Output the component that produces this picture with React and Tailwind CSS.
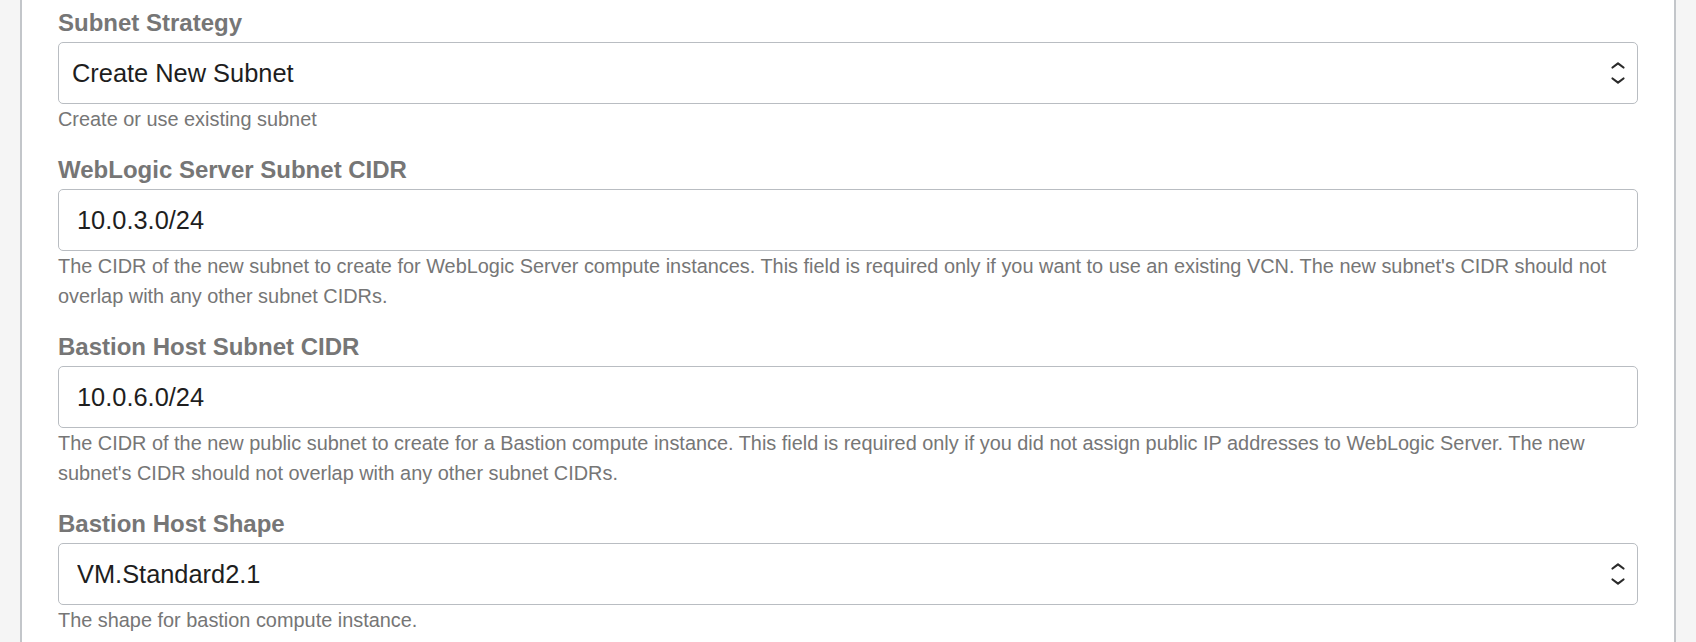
import React from 'react';

const fields = [
  {
    label: 'Subnet Strategy',
    type: 'select',
    value: 'Create New Subnet',
    pad: 'pl-[13px]',
    help: 'Create or use existing subnet',
  },
  {
    label: 'WebLogic Server Subnet CIDR',
    type: 'input',
    value: '10.0.3.0/24',
    pad: 'pl-[18px]',
    help: "The CIDR of the new subnet to create for WebLogic Server compute instances. This field is required only if you want to use an existing VCN. The new subnet's CIDR should not overlap with any other subnet CIDRs.",
  },
  {
    label: 'Bastion Host Subnet CIDR',
    type: 'input',
    value: '10.0.6.0/24',
    pad: 'pl-[18px]',
    help: "The CIDR of the new public subnet to create for a Bastion compute instance. This field is required only if you did not assign public IP addresses to WebLogic Server. The new subnet's CIDR should not overlap with any other subnet CIDRs.",
  },
  {
    label: 'Bastion Host Shape',
    type: 'select',
    value: 'VM.Standard2.1',
    pad: 'pl-[18px]',
    help: 'The shape for bastion compute instance.',
  },
];

const Chevrons = () => (
  <svg
    width="16"
    height="23"
    viewBox="0 0 16 23"
    fill="none"
    stroke="#2b2b2b"
    strokeWidth="2.2"
    strokeLinecap="round"
    strokeLinejoin="round"
    className="pointer-events-none absolute right-[12px] top-1/2 -translate-y-1/2"
  >
    <polyline points="2.5,6 8,1.8 13.5,6" />
    <polyline points="2.5,17 8,21.2 13.5,17" />
  </svg>
);

const Field = ({ field, first }) => {
  const control =
    'h-[62px] w-full rounded-[5px] border border-[#b9bdc2] bg-white text-[25.4px] text-[#1e1e1e] outline-none';

  return (
    <div className={first ? '' : 'mt-[22px]'}>
      <label className="block text-[24px] font-bold leading-[28px] text-[#767676]">{field.label}</label>
      <div className="relative mt-[5px]">
        {field.type === 'select' ? (
          <>
            <select className={`${control} ${field.pad} appearance-none`} defaultValue={field.value}>
              <option>{field.value}</option>
            </select>
            <Chevrons />
          </>
        ) : (
          <input className={`${control} ${field.pad}`} defaultValue={field.value} readOnly />
        )}
      </div>
      <p className="text-[19.9px] leading-[30px] text-[#767676]">{field.help}</p>
    </div>
  );
};

export default function App() {
  return (
    <div className="flex h-[642px] w-full overflow-hidden bg-[#f5f5f5] font-['Liberation_Sans',Arial,sans-serif]">
      <div className="mx-[20px] flex-1 border-x-2 border-[#c3c6ca] bg-white px-[36px] pt-[9px]">
        {fields.map((f, i) => (
          <Field key={f.label} field={f} first={i === 0} />
        ))}
      </div>
    </div>
  );
}
